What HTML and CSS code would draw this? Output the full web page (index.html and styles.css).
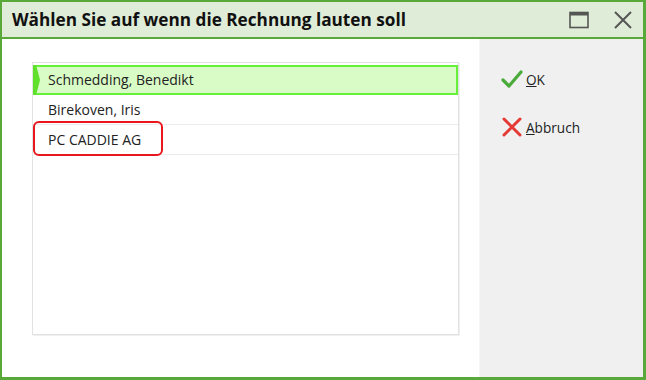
FILE: index.html
```html
<!DOCTYPE html>
<html lang="de">
<head>
    <meta charset="UTF-8">
    <title>Rechnung</title>
    <link rel="stylesheet" href="styles.css">
</head>
<body>

<div class="window">
    <header class="titlebar">
        <h1>Wählen Sie auf wenn die Rechnung lauten soll</h1>
        <div class="controls">
            <svg class="ctl" width="20" height="18" viewBox="0 0 20 18">
                <rect x="1" y="1.5" width="18" height="15" fill="none" stroke="#555" stroke-width="1.6"/>
                <rect x="1" y="1.5" width="18" height="3" fill="#555"/>
            </svg>
            <svg class="ctl" width="20" height="18" viewBox="0 0 20 18">
                <path d="M2 1 L18 17 M18 1 L2 17" stroke="#555" stroke-width="2"/>
            </svg>
        </div>
    </header>

    <div class="body">
        <main class="content">
            <ul class="list">
                <li class="row selected">Schmedding, Benedikt</li>
                <li class="row">Birekoven, Iris</li>
                <li class="row marked">PC CADDIE AG</li>
            </ul>
        </main>

        <aside class="actions">
            <button type="button" class="action">
                <svg width="22" height="20" viewBox="0 0 22 20">
                    <path d="M2 11 L8 17 L20 3" fill="none" stroke="#4aaa3a" stroke-width="3.2" stroke-linecap="round" stroke-linejoin="round"/>
                </svg>
                <span><u>O</u>K</span>
            </button>
            <button type="button" class="action">
                <svg width="22" height="20" viewBox="0 0 22 20">
                    <path d="M3 2 L19 18 M19 2 L3 18" stroke="#e53935" stroke-width="3" stroke-linecap="round"/>
                </svg>
                <span><u>A</u>bbruch</span>
            </button>
        </aside>
    </div>
</div>

</body>
</html>
```

FILE: styles.css
```css
html, body {
    margin: 0;
    padding: 0;
}

body {
    font-family: "Open Sans", sans-serif;
    width: 646px;
    height: 380px;
}

.window {
    box-sizing: border-box;
    width: 646px;
    height: 380px;
    border: 2px solid #58a83a;
    border-right-width: 3px;
    border-bottom-width: 3px;
    display: flex;
    flex-direction: column;
}

.titlebar {
    height: 35px;
    background-color: #dfecd7;
    border-bottom: 2px solid #58a83a;
    display: flex;
    align-items: center;
    justify-content: space-between;
    padding: 0 10px 0 10px;
}

.titlebar h1 {
    margin: 0;
    font-size: 17.2px;
    font-weight: 700;
    color: #111;
}

.controls {
    display: flex;
    gap: 24px;
    align-items: center;
    padding-top: 1px;
}

.body {
    flex: 1;
    display: flex;
}

.content {
    width: 477px;
    background-color: #fff;
    padding: 23px 0 0 30px;
    box-sizing: border-box;
}

.list {
    list-style: none;
    margin: 0;
    padding: 2px 0 0 0;
    width: 427px;
    height: 273px;
    box-sizing: border-box;
    border: 1px solid #e2e2e2;
    box-shadow: 1px 1px 0 #f0f0f0;
}

.row {
    position: relative;
    height: 30px;
    box-sizing: border-box;
    line-height: 29px;
    padding-left: 15px;
    font-size: 14px;
    color: #222;
    border-bottom: 1px solid #ececec;
}

.row.selected {
    background-color: #d9fcc6;
    border: 2px solid #66f03a;
    line-height: 26px;
    padding-left: 13px;
}

.row.selected::before {
    content: "";
    position: absolute;
    left: -2px;
    top: -2px;
    width: 7px;
    height: 30px;
    background-color: #5fe02a;
    clip-path: polygon(0 0, 45% 0, 100% 50%, 45% 100%, 0 100%);
}

.row.marked::after {
    content: "";
    position: absolute;
    left: 0;
    top: -4px;
    width: 130px;
    height: 35px;
    box-sizing: border-box;
    border: 2px solid #e8161d;
    border-radius: 6px;
}

.actions {
    flex: 1;
    background-color: #f0f0f0;
    border-left: 1px solid #f6f6f6;
    padding: 30px 0 0 21px;
    display: flex;
    flex-direction: column;
    gap: 28px;
}

.action {
    display: flex;
    align-items: center;
    gap: 3px;
    background: none;
    border: none;
    padding: 0;
    font-family: "Open Sans", sans-serif;
    font-size: 13.6px;
    color: #222;
    cursor: pointer;
    text-align: left;
}
```
